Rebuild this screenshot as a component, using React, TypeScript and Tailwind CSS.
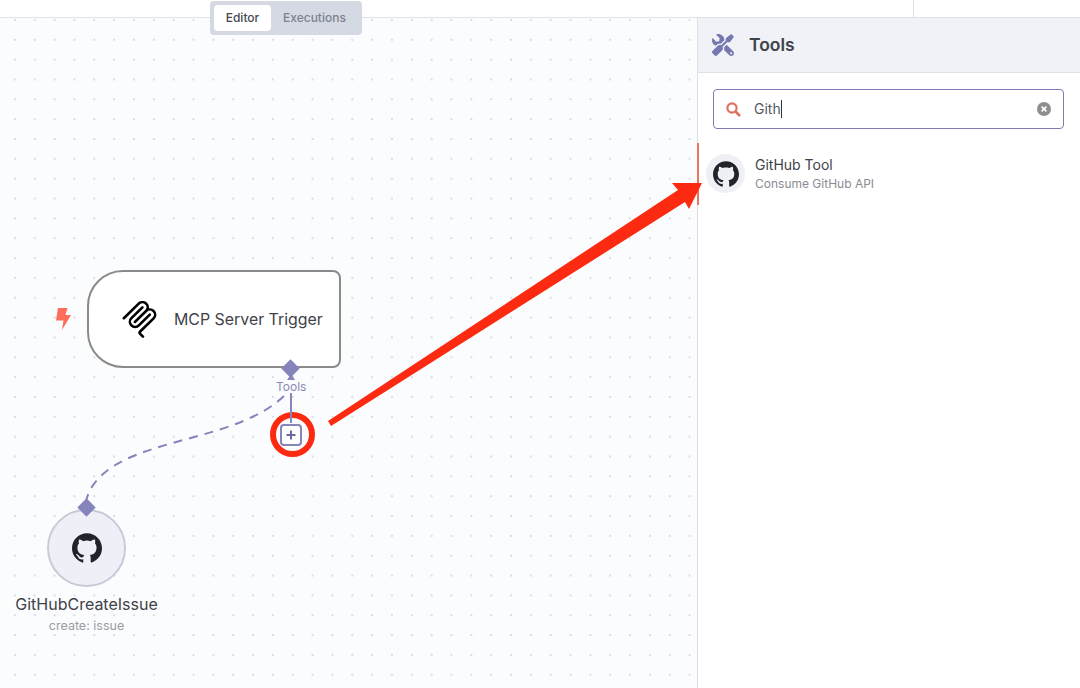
import { FaTools } from "react-icons/fa";
import { SiGithub } from "react-icons/si";

function McpLogo({ className }: { className?: string }) {
  return (
    <svg viewBox="0 0 24 24" fill="currentColor" className={className}>
      <path d="M15.688 2.343a2.588 2.588 0 00-3.61 0l-9.626 9.44a.863.863 0 01-1.203 0 .823.823 0 010-1.18l9.626-9.44a4.313 4.313 0 016.016 0 4.116 4.116 0 011.204 3.54 4.3 4.3 0 013.609 1.18l.05.05a4.115 4.115 0 010 5.9l-8.706 8.537a.274.274 0 000 .393l1.788 1.754a.823.823 0 010 1.18.863.863 0 01-1.203 0l-1.788-1.753a1.92 1.92 0 010-2.754l8.706-8.538a2.47 2.47 0 000-3.54l-.05-.049a2.588 2.588 0 00-3.607-.003l-7.172 7.034-.002.002-.098.097a.863.863 0 01-1.204 0 .823.823 0 010-1.18l7.273-7.133a2.47 2.47 0 00-.003-3.537z" />
      <path d="M14.485 4.703a.823.823 0 000-1.18.863.863 0 00-1.204 0l-7.119 6.982a4.115 4.115 0 000 5.9 4.314 4.314 0 006.016 0l7.12-6.982a.823.823 0 000-1.18.863.863 0 00-1.204 0l-7.119 6.982a2.588 2.588 0 01-3.61 0 2.47 2.47 0 010-3.54l7.12-6.982z" />
    </svg>
  );
}

function Diamond({ className }: { className?: string }) {
  return <div className={`absolute h-[13px] w-[13px] rotate-45 bg-[#8585bb] ${className}`} />;
}

function Canvas() {
  return (
    <div className="relative flex-1 overflow-hidden border-r border-[#dfe1e6] bg-[#fbfcfe] bg-[radial-gradient(circle,#c4c7d0_0.5px,transparent_1px)] bg-[size:19.85px_19.85px] bg-[position:5px_-8px]">
      {/* add button ring goes under the connector */}
      <div className="absolute left-[270px] top-[394px] flex h-[45px] w-[45px] items-center justify-center rounded-full border-[6px] border-[#fb2a10] pr-[4px]">
        <div className="flex h-[22px] w-[22px] shrink-0 items-center justify-center rounded-[4px] border-2 border-[#8585bb] bg-white text-[#6a6a9c]">
          <svg viewBox="0 0 12 12" className="h-[12px] w-[12px]" stroke="currentColor" strokeWidth="2">
            <path d="M6 1.5v9M1.5 6h9" />
          </svg>
        </div>
      </div>

      {/* connector lines */}
      <svg className="absolute left-0 top-0 h-full w-full" fill="none">
        <path d="M284 378 C240 420 150 420 108 452 C96 461 88 472 86 484" stroke="#8585bb" strokeWidth="2" strokeDasharray="9 7" />
        <path d="M291 375 V405" stroke="#8585bb" strokeWidth="2" />
        <path d="M291 356 L295 362 H287 Z" fill="#8585bb" />
      </svg>

      <div className="absolute left-[56px] top-[290px] text-[#ff6d5a]">
        <svg viewBox="0 0 16 24" className="h-[24px] w-[16px]" fill="currentColor">
          <path d="M2 0h9.5L9.5 7H15L6 22l1.5-9.5H0z" />
        </svg>
      </div>

      {/* trigger node */}
      <div className="absolute left-[87px] top-[252px] flex h-[98px] w-[254px] items-center rounded-l-[36px] rounded-r-[8px] border-2 border-[#8a8a8a] bg-white pl-[32px]">
        <McpLogo className="h-[37px] w-[37px] text-black" />
        <span className="ml-[16px] whitespace-nowrap pt-[2px] text-[15.9px] font-normal text-[#3f4249]">MCP Server Trigger</span>
      </div>
      <Diamond className="left-[284px] top-[344px]" />
      <div className="absolute left-[276px] top-[361px] text-[12px] leading-[15px] text-[#8a8ab4]">Tools</div>

      {/* tool node */}
      <div className="absolute left-[47px] top-[491px] flex h-[78px] w-[79px] items-center justify-center rounded-full border-2 border-[#c9cad9] bg-[#eff0f7]">
        <SiGithub className="h-[30px] w-[30px] text-[#202328]" />
      </div>
      <Diamond className="left-[80px] top-[483px]" />
      <div className="absolute left-0 top-[576px] w-[173px] text-center">
        <div className="text-[16px] font-normal leading-[20px] text-[#3f4249]">GitHubCreateIssue</div>
        <div className="mt-[3px] text-[12.5px] leading-[18px] text-[#9a9ca3]">create: issue</div>
      </div>
    </div>
  );
}

function ToolsPanel() {
  return (
    <aside className="flex w-[382px] shrink-0 flex-col bg-white">
      <header className="flex h-[55px] items-center border-b border-[#dfe1e6] bg-[#f0f2f8] pl-[14px]">
        <FaTools className="h-[22px] w-[22px] -scale-x-100 text-[#7878b0]" />
        <h2 className="ml-[15px] text-[17.5px] font-semibold text-[#3f4249]">Tools</h2>
      </header>
      <div className="mx-[15px] mt-[16px] flex h-[40px] w-[351px] items-center rounded-[4px] border border-[#8278b8] pl-[12px] pr-[12px]">
        <svg viewBox="0 0 15 15" className="h-[15px] w-[15px] text-[#e0705e]" fill="none" stroke="currentColor">
          <circle cx="6" cy="6" r="4.6" strokeWidth="2.2" />
          <path d="M9.5 9.5L14 14" strokeWidth="2.6" />
        </svg>
        <span className="ml-[13px] border-r border-[#333] text-[14px] leading-[18px] text-[#55585f]">Gith</span>
        <div className="ml-auto flex h-[14px] w-[14px] items-center justify-center rounded-full bg-[#8e8e8e]">
          <svg viewBox="0 0 10 10" className="h-[8px] w-[8px]" stroke="white" strokeWidth="2">
            <path d="M2 2l6 6M8 2l-6 6" />
          </svg>
        </div>
      </div>
      <div className="mt-[25px] flex items-center pl-[8px]">
        <div className="flex h-[39px] w-[39px] items-center justify-center rounded-full bg-[#eff0f5]">
          <SiGithub className="h-[26px] w-[26px] text-[#202328]" />
        </div>
        <div className="ml-[10px]">
          <div className="text-[14px] font-normal leading-[18px] text-[#3f4249]">GitHub Tool</div>
          <div className="mt-[2px] text-[12px] leading-[16px] text-[#8a8c93]">Consume GitHub API</div>
        </div>
      </div>
    </aside>
  );
}

export default function App() {
  return (
    <div className="relative flex h-[688px] w-[1080px] flex-col overflow-hidden bg-white font-['Inter',sans-serif]">
      <div className="flex h-[18px] shrink-0 justify-end border-b border-[#dfe1e6] bg-white">
        <div className="mr-[166px] h-full border-r border-[#dfe1e6]" />
      </div>

      <div className="flex flex-1">
        <Canvas />
        <ToolsPanel />
      </div>

      {/* tab switcher sits over the header line */}
      <div className="absolute left-[210px] top-[1px] flex h-[34px] w-[152px] items-center rounded-[4px] bg-[#d5d9e4] p-[4px] text-[12px] font-medium">
        <div className="flex h-[26px] w-[57px] items-center justify-center rounded-[4px] bg-white text-[#45484f]">Editor</div>
        <div className="ml-[12px] text-[#7e828d]">Executions</div>
      </div>

      {/* annotation arrow */}
      <div className="absolute left-[697px] top-[143px] h-[62px] w-[2px] bg-[#f0735f]" />
      <svg className="pointer-events-none absolute left-0 top-0 h-full w-full" fill="#fb2a10">
        <path d="M328 421 L678 190 L672 183 L702 183 L689 209 L685 202 L331 426 Z" />
      </svg>
    </div>
  );
}
